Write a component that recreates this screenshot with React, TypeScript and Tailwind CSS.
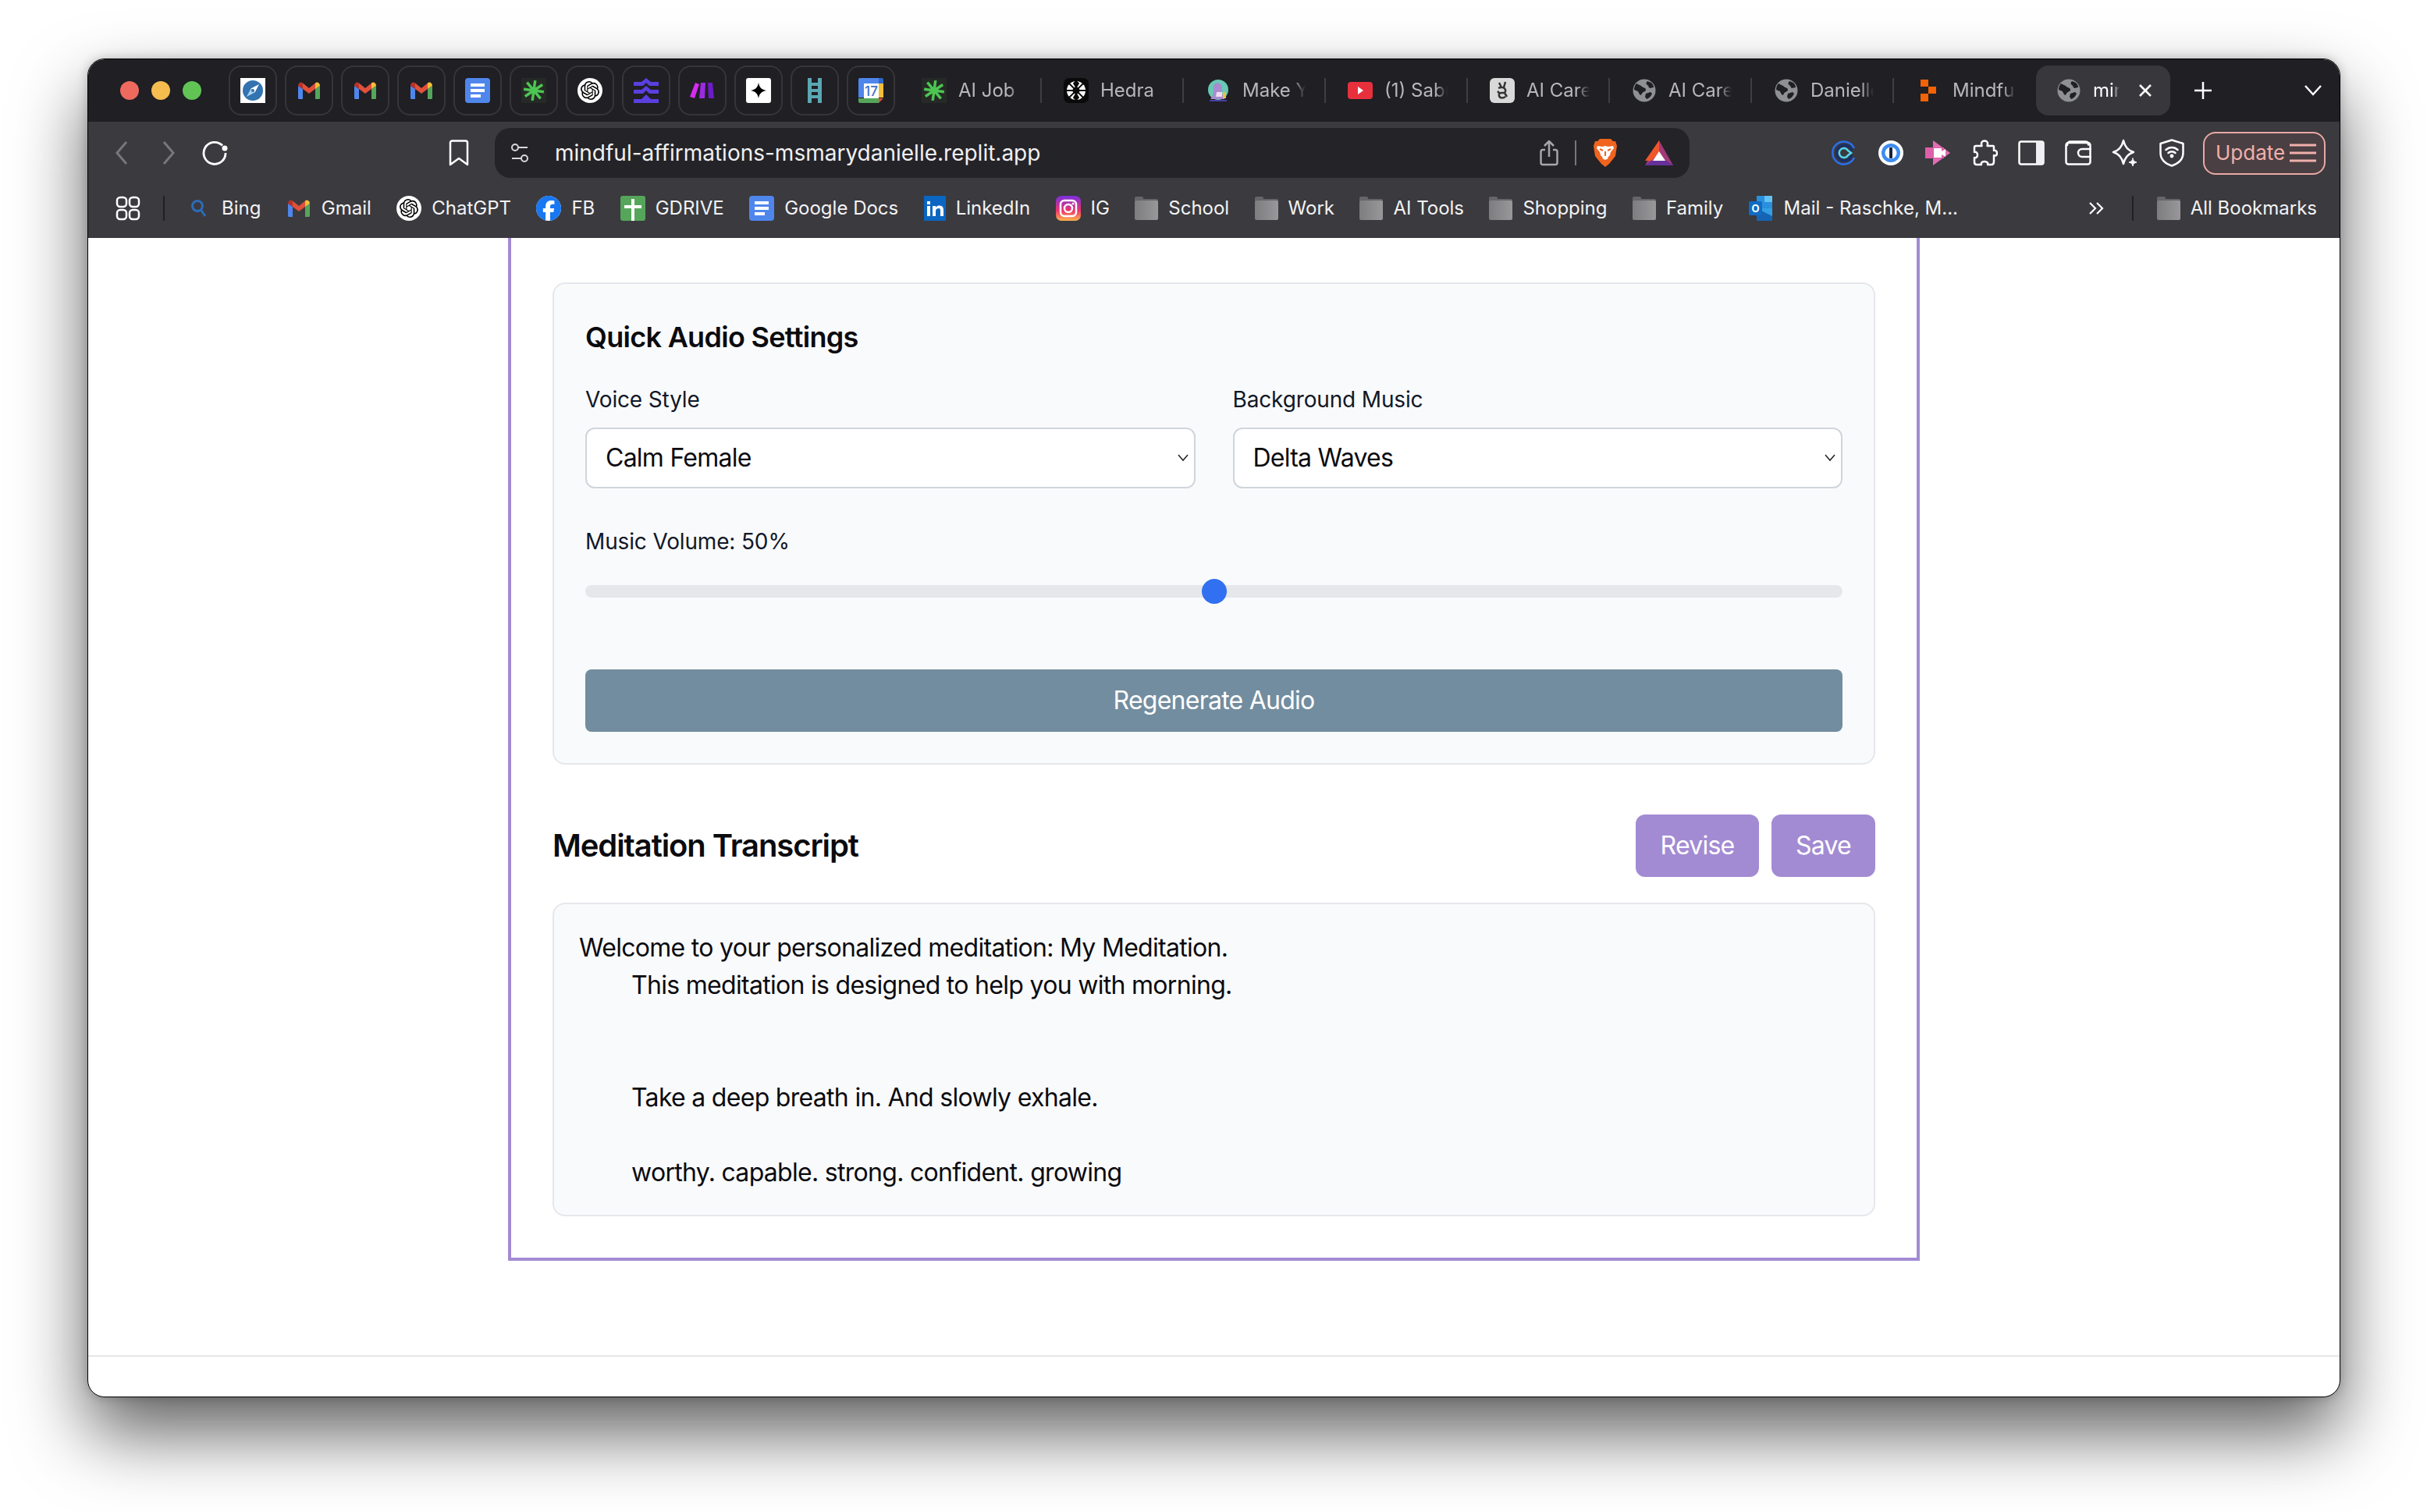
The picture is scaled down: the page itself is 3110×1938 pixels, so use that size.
import { SiOpenai, SiFacebook } from "react-icons/si";

const Gmail = () => (
	<svg width="32" height="32" viewBox="0 0 32 32">
		<path d="M2 10v15.500A1.500 1.500 0 0 0 3.500 27H8V14z" fill="#4f86ec" />
		<path d="M24 14v13h4.500a1.500 1.500 0 0 0 1.500-1.500V10z" fill="#55a65a" />
		<path d="M8 6.500 16 13l8-6.500V14l-8 6-8-6z" fill="#e0503a" />
		<path d="M2 10c0-4 4-5.500 6-3.500V14l-6-4z" fill="#b5342a" />
		<path d="M30 10c0-4-4-5.500-6-3.500V14l6-4z" fill="#f4be3a" />
	</svg>
);

const Compass = () => (
	<svg width="32" height="32" viewBox="0 0 32 32">
		<rect width="32" height="32" fill="#fff" />
		<circle cx="16" cy="16" r="13" fill="#3273b0" />
		<path d="M24 8 18.500 18.500 13.500 13.500z" fill="#fff" />
		<path d="M8 24 13.500 13.500 18.500 18.500z" fill="#a5d3f0" />
		<circle cx="16" cy="16" r="2" fill="#3273b0" />
	</svg>
);

const Docs = () => (
	<svg width="32" height="32" viewBox="0 0 32 32">
		<rect width="32" height="32" rx="4" fill="#4f86ec" />
		<path d="M7 7h18v4H7zM7 14h18v4H7zM7 21h13v4H7z" fill="#fff" />
	</svg>
);

const Spark = () => (
	<svg width="32" height="32" viewBox="0 0 32 32">
		<rect width="32" height="32" fill="#262a26" />
		<path d="M16 3v26M6 7l20 18M26 7 6 25M3 16h26" stroke="#4cc552" strokeWidth="3.500" transform="rotate(8 16 16)" />
	</svg>
);

const ChatGpt = () => (
	<span className="flex h-8 w-8 items-center justify-center rounded-full bg-white text-black">
		<SiOpenai size={24} />
	</span>
);

const Layers = () => (
	<svg width="32" height="32" viewBox="0 0 32 32" fill="#5b3fe0">
		<path d="M0 5h10l6-5 6 5h10v5H20l-4-4-4 4H0z" />
		<path d="M0 15h10l6-5 6 5h10v5H20l-4-4-4 4H0z" />
		<path d="M0 27h10l6-6 6 6h10v5H0z" />
	</svg>
);

const Make = () => (
	<svg width="32" height="32" viewBox="0 0 32 32">
		<path d="M7 6 12 8 6 26 0 24z" fill="#d52cf0" />
		<path d="M14 6h6l-1 20h-7z" fill="#9a2be0" />
		<path d="M23 6h6l2 20h-7z" fill="#6d1cc8" />
	</svg>
);

const GeminiStar = () => (
	<svg width="32" height="32" viewBox="0 0 32 32">
		<rect width="32" height="32" rx="3" fill="#fff" />
		<path d="M16 6c1 6 4 9 10 10-6 1-9 4-10 10-1-6-4-9-10-10 6-1 9-4 10-10z" fill="#000" />
	</svg>
);

const Ladder = () => (
	<svg width="32" height="32" viewBox="0 0 32 32" fill="#5ba7b3">
		<path d="M7 0h5v32H7zM20 0h5v32h-5zM12 6h8v4h-8zM12 14h8v4h-8zM12 22h8v4h-8z" />
	</svg>
);

const Calendar = () => (
	<svg width="32" height="32" viewBox="0 0 32 32">
		<path d="M0 2a2 2 0 0 1 2-2h24v7H7v18H0z" fill="#4f86ec" />
		<path d="M26 0h4a2 2 0 0 1 2 2v5h-6z" fill="#2f66c8" />
		<rect x="7" y="7" width="19" height="19" fill="#fff" />
		<path d="M26 7h6v18h-6z" fill="#f4be3a" />
		<path d="M0 26h26v6H2a2 2 0 0 1-2-2z" fill="#55a65a" />
		<path d="M26 26h6l-6 6z" fill="#e0503a" />
		<text x="16.500" y="23" textAnchor="middle" fontSize="17" fontFamily="Inter, sans-serif" fontWeight="500" fill="#3d70c9">17</text>
	</svg>
);

const Hedra = () => (
	<svg width="32" height="32" viewBox="0 0 32 32">
		<rect width="32" height="32" rx="7" fill="#0a0a0a" />
		<circle cx="16" cy="16" r="12" fill="#fff" />
		<path d="M16 4l-3 3 3 5 3-5zM16 28l-3-3 3-5 3 5zM4 16h4l4 0M28 16h-4l-4 0M7 7l7 7M25 25l-7-7M25 7l-7 7M7 25l7-7" stroke="#0a0a0a" strokeWidth="1.800" fill="#0a0a0a" />
		<circle cx="16" cy="16" r="4.500" fill="#0a0a0a" />
	</svg>
);

const Mascot = () => (
	<svg width="32" height="32" viewBox="0 0 32 32">
		<circle cx="16" cy="15" r="13" fill="#68c9b4" />
		<path d="M12 7c5-2 9 1 9 6v8h3v6H6c3-3 4-6 4-10 0-3 0-8 2-10z" fill="#a98bd0" />
		<path d="M14 18h7v6h-8z" fill="#f1dcef" />
		<rect x="22" y="18" width="4" height="8" fill="#e8c24a" />
		<path d="M5 28h22v2H5z" fill="#4a3fa8" />
	</svg>
);

const YouTube = () => (
	<svg width="32" height="32" viewBox="0 0 32 32">
		<rect y="5" width="32" height="22" rx="4" fill="#e8303d" />
		<path d="M13 11l7 5-7 5z" fill="#fff" />
	</svg>
);

const Hand = () => (
	<svg width="32" height="32" viewBox="0 0 32 32">
		<rect width="32" height="32" rx="6" fill="#d9d9d9" />
		<path d="M12 6l3 6M20 5l-2 7M11 13c4-2 8-1 9 2s-1 4-4 4 -5 1-4 4 5 3 8 1M10 17l3 3M19 19l3 5" stroke="#333" strokeWidth="2.500" fill="none" />
	</svg>
);

const Globe = () => (
	<svg width="32" height="32" viewBox="0 0 32 32">
		<circle cx="16" cy="16" r="14.500" fill="#8e9093" />
		<path d="M6 7c3 2 5 2 7 4s5 1 5 4-4 2-5 5-3 2-4-1-4-3-6-4c0-3 1-6 3-8zM20 4l5 2c2 2 3 4 3 6l-5 1c-2-1-1-3-3-4s-2-3 0-5zM18 20l6-2 2 2c-2 4-4 6-7 7l-2-3z" fill="#1f1f24" />
	</svg>
);

const Replit = () => (
	<svg width="32" height="32" viewBox="0 0 32 32" fill="#f26207">
		<path d="M6 2h10v9H6zM16 11h10v9H16zM6 20h10v10H6z" />
	</svg>
);

const Folder = () => (
	<svg width="30" height="32" viewBox="0 0 30 32">
		<defs>
			<linearGradient id="fold" x1="0" x2="1" y1="0" y2="0">
				<stop offset="0" stopColor="#7d7d80" />
				<stop offset="1" stopColor="#98989b" />
			</linearGradient>
		</defs>
		<path d="M0 3a2 2 0 0 1 2-2h7a2 2 0 0 1 2 2v1h17a2 2 0 0 1 2 2v2H0z" fill="#66666a" />
		<rect y="6" width="30" height="25" rx="2" fill="url(#fold)" />
	</svg>
);

const pinned = [Compass, Gmail, Gmail, Gmail, Docs, Spark, ChatGpt, Layers, Make, GeminiStar, Ladder, Calendar];

const tabs = [
	{ Icon: Spark, title: "AI Job Search", sep: true },
	{ Icon: Hedra, title: "Hedra", sep: true },
	{ Icon: Mascot, title: "Make Your Own", sep: true },
	{ Icon: YouTube, title: "(1) Sabrina", sep: true },
	{ Icon: Hand, title: "AI Career", sep: true },
	{ Icon: Globe, title: "AI Career", sep: true },
	{ Icon: Globe, title: "Danielle", sep: true },
	{ Icon: Replit, title: "Mindful", sep: false },
];

const BingIcon = () => (
	<svg width="32" height="32" viewBox="0 0 32 32" fill="none" stroke="#2b6cb8" strokeWidth="3">
		<circle cx="14" cy="13" r="6.500" />
		<path d="M18.500 18 24 26" />
	</svg>
);

const Drive = () => (
	<svg width="32" height="32" viewBox="0 0 32 32">
		<rect width="32" height="32" rx="3" fill="#55a65a" />
		<path d="M14 4h4v8h9v4h-9v16h-4V16H5v-4h9z" fill="#fff" />
	</svg>
);

const Fb = () => (
	<span className="flex h-8 w-8 items-center justify-center rounded-full bg-white text-[#1877f2]">
		<SiFacebook size={32} />
	</span>
);

const LinkedIn = () => (
	<svg width="28" height="32" viewBox="0 0 28 32">
		<rect width="28" height="32" fill="#0a66c2" />
		<path d="M4 13h4v13H4zM4 7h4v4H4zM11 13h4v2c1-2 3-2.500 5-2.500 4 0 5 3 5 6V26h-4v-7c0-2-.5-3-2-3s-4 1-4 3v7h-4z" fill="#fff" />
	</svg>
);

const Insta = () => (
	<svg width="32" height="32" viewBox="0 0 32 32">
		<defs>
			<linearGradient id="ig" x1="0" x2="0" y1="1" y2="0">
				<stop offset="0" stopColor="#fdb44b" />
				<stop offset="0.4" stopColor="#f0356b" />
				<stop offset="1" stopColor="#7a2fe0" />
			</linearGradient>
		</defs>
		<rect width="32" height="32" rx="7" fill="url(#ig)" />
		<rect x="6" y="6" width="20" height="20" rx="5" fill="none" stroke="#fff" strokeWidth="2.500" />
		<circle cx="16" cy="16" r="5" fill="none" stroke="#fff" strokeWidth="2.500" />
		<circle cx="22" cy="10" r="1.500" fill="#fff" />
	</svg>
);

const Outlook = () => (
	<svg width="32" height="32" viewBox="0 0 32 32">
		<path d="M10 0h20v16H10z" fill="#2a8fdc" />
		<path d="M20 0h10v8H20z" fill="#62c3f2" />
		<path d="M10 16h20v16H10z" fill="#1664b4" />
		<path d="M10 16l20 10V16z" fill="#33a0e6" />
		<rect y="7" width="17" height="18" rx="2" fill="#0f6cc4" />
		<text x="8.500" y="21" textAnchor="middle" fontSize="13" fontWeight="700" fontFamily="Inter, sans-serif" fill="#fff">O</text>
	</svg>
);

const bookmarks = [
	{ Icon: BingIcon, label: "Bing" },
	{ Icon: Gmail, label: "Gmail" },
	{ Icon: ChatGpt, label: "ChatGPT" },
	{ Icon: Fb, label: "FB" },
	{ Icon: Drive, label: "GDRIVE" },
	{ Icon: Docs, label: "Google Docs" },
	{ Icon: LinkedIn, label: "LinkedIn" },
	{ Icon: Insta, label: "IG" },
	{ Icon: Folder, label: "School" },
	{ Icon: Folder, label: "Work" },
	{ Icon: Folder, label: "AI Tools" },
	{ Icon: Folder, label: "Shopping" },
	{ Icon: Folder, label: "Family" },
	{ Icon: Outlook, label: "Mail - Raschke, M..." },
];

const stroke = { fill: "none", stroke: "#fff", strokeWidth: 2.500, strokeLinecap: "round", strokeLinejoin: "round" } as const;

const extensions = [
	<svg key="cal" width="32" height="32" viewBox="0 0 32 32" fill="none">
		<path d="M29 10A14.500 14.500 0 1 0 29 22" stroke="#2b6fe8" strokeWidth="2.500" />
		<path d="M26 13a10 10 0 1 0 0 6" stroke="#15306e" strokeWidth="3" />
		<path d="M21 13a6 6 0 1 0 0 6l4-3z" stroke="#54d8ee" strokeWidth="2.500" />
	</svg>,
	<svg key="one" width="32" height="32" viewBox="0 0 32 32">
		<circle cx="16" cy="16" r="16" fill="#fff" />
		<circle cx="16" cy="16" r="12" fill="#3d8cf0" />
		<circle cx="16" cy="16" r="7.500" fill="#fff" />
		<rect x="14" y="9" width="4" height="14" rx="1" fill="#16243e" />
	</svg>,
	<svg key="vid" width="32" height="32" viewBox="0 0 32 32">
		<path d="M10 0l22 16-22 16z" fill="#e36cb5" />
		<rect y="9" width="24" height="14" fill="#de5fa9" />
		<path d="M11 10h10v12H11zM21 14l5-3v10l-5-3z" fill="#fff" />
	</svg>,
	<svg key="puz" width="34" height="34" viewBox="0 0 34 34" {...stroke}>
		<path d="M13 5c0-2 2-3.500 4-3.500S21 3 21 5c0 1 0 2-.5 3H28c1 0 1 .5 1 1.500V14c2-1 4 1 4 3.500S31 21 29 20v8c0 3-1 4-3 4h-5c1-2-1-4-4-4s-5 2-4 4H7c-2 0-3-1-3-3v-6c2 1 4-1 4-3.500S6 15 4 16V10c0-1.500 1-2 2-2h7.500C13 7 13 6 13 5z" />
	</svg>,
	<svg key="side" width="34" height="32" viewBox="0 0 34 32">
		<rect x="1.500" y="1.500" width="31" height="29" rx="2.500" fill="none" stroke="#fff" strokeWidth="2.500" />
		<path d="M23 1.500h7a2.500 2.500 0 0 1 2.500 2.500v24a2.500 2.500 0 0 1-2.500 2.500h-7z" fill="#f0f0f3" />
	</svg>,
	<svg key="wal" width="34" height="32" viewBox="0 0 34 32" {...stroke}>
		<rect x="1.500" y="3" width="31" height="27.500" rx="3" />
		<path d="M3 6c0-3 2-4.500 4-4.500h19c3 0 4 2 4 4M32.500 11H22a5 5 0 0 0 0 10h10.500" />
	</svg>,
	<svg key="spa" width="34" height="36" viewBox="0 0 34 36" {...stroke}>
		<path d="M15 2c2 9 6 13 13 15-7 2-11 6-13 15-2-9-6-13-13-15 7-2 11-6 13-15z" />
		<path d="M27 25c.5 3 1.500 4 5 5-3.500 1-4.500 2-5 5-.5-3-1.500-4-5-5 3.500-1 4.500-2 5-5z" fill="#fff" strokeWidth="1" />
	</svg>,
	<svg key="shi" width="32" height="36" viewBox="0 0 32 36" {...stroke}>
		<path d="M16 1.500 30.500 6v12c0 9-7 14-14.500 16.500C8.500 32 1.500 27 1.500 18V6z" />
		<path d="M8.500 14c4-4 11-4 15 0M11.500 18c2.500-2.500 6.500-2.500 9 0" />
		<circle cx="16" cy="22" r="1.200" fill="#fff" />
	</svg>,
];

function Browser() {
	return (
		<div className="h-[229px] shrink-0">
			{/* tab strip */}
			<div className="flex h-20 items-center bg-[#1f1f24]">
				<div className="ml-[41px] flex gap-4">
					<span className="h-6 w-6 rounded-full bg-[#ee6a5f]" />
					<span className="h-6 w-6 rounded-full bg-[#f5bd4f]" />
					<span className="h-6 w-6 rounded-full bg-[#61c454]" />
				</div>
				<div className="ml-[35px] flex gap-[10px]">
					{pinned.map((Icon, i) => (
						<div key={i} className="flex h-16 w-[62px] items-center justify-center rounded-2xl border-2 border-[#36353a]">
							<Icon />
						</div>
					))}
				</div>
				<div className="ml-[6px] flex">
					{tabs.map((t, i) => (
						<div key={i} className="flex h-16 w-[182px] items-center pl-[28px]">
							<t.Icon />
							<span className="ml-[15px] w-[81px] overflow-hidden whitespace-nowrap text-2xl text-[#b8b8ba] [mask-image:linear-gradient(to_right,black_80%,transparent)]">
								{t.title}
							</span>
							{t.sep && <span className="ml-auto h-8 w-[2px] bg-[#3f3e43]" />}
						</div>
					))}
				</div>
				<div className="flex h-16 w-[172px] items-center rounded-2xl bg-[#38373c] pl-[26px]">
					<Globe />
					<span className="ml-[15px] w-[34px] overflow-hidden whitespace-nowrap text-2xl text-white [mask-image:linear-gradient(to_right,black_70%,transparent)]">mindful</span>
					<svg className="ml-[23px]" width="20" height="20" viewBox="0 0 20 20" stroke="#fff" strokeWidth="2.500">
						<path d="M3 3l14 14M17 3 3 17" />
					</svg>
				</div>
				<svg className="ml-[30px]" width="24" height="24" viewBox="0 0 24 24" stroke="#fff" strokeWidth="2.500">
					<path d="M12 1v22M1 12h22" />
				</svg>
				<svg className="ml-[118px]" width="22" height="14" viewBox="0 0 22 14" fill="none" stroke="#fff" strokeWidth="2.500">
					<path d="M1 1l10 11L21 1" />
				</svg>
			</div>

			{/* toolbar */}
			<div className="flex h-20 items-center bg-[#3b3a3f]">
				<div className="ml-[13px] flex w-[60px] justify-center">
					<svg width="18" height="32" viewBox="0 0 18 32" fill="none" stroke="#77777b" strokeWidth="3"><path d="M15 2 3 16l12 14" /></svg>
				</div>
				<div className="flex w-[60px] justify-center">
					<svg width="18" height="32" viewBox="0 0 18 32" fill="none" stroke="#77777b" strokeWidth="3"><path d="M3 2l12 14L3 30" /></svg>
				</div>
				<div className="flex w-[60px] justify-center">
					<svg width="36" height="32" viewBox="0 0 36 32" fill="none" stroke="#fff" strokeWidth="2.800">
						<path d="M27 6.500A14 14 0 1 0 31 16" />
						<circle cx="30" cy="10" r="3.500" fill="#fff" stroke="none" />
					</svg>
				</div>
				<div className="ml-[252px] flex w-[60px] justify-center">
					<svg width="26" height="34" viewBox="0 0 26 34" fill="none" stroke="#fff" strokeWidth="2.500" strokeLinejoin="round">
						<path d="M2 4a2.500 2.500 0 0 1 2.500-2.500h17A2.500 2.500 0 0 1 24 4v28l-11-8-11 8z" />
					</svg>
				</div>
				<div className="ml-4 flex h-16 w-[1531px] items-center rounded-[20px] bg-[#242328] pl-5 pr-[21px]">
					<svg width="24" height="26" viewBox="0 0 24 26" fill="none" stroke="#d8d8da" strokeWidth="2">
						<circle cx="6" cy="6" r="4" />
						<path d="M10 6h12M2 20h12" />
						<circle cx="18" cy="20" r="4" />
					</svg>
					<span className="ml-[33px] text-[28px] text-[#f0f0f1]">mindful-affirmations-msmarydanielle.replit.app</span>
					<svg className="ml-auto" width="24" height="34" viewBox="0 0 24 34" fill="none" stroke="#a6a6a9" strokeWidth="2.500" strokeLinejoin="round">
						<path d="M7 13H4a2.500 2.500 0 0 0-2.500 2.500v14A2.500 2.500 0 0 0 4 32h16a2.500 2.500 0 0 0 2.500-2.500v-14A2.500 2.500 0 0 0 20 13h-3M12 22V2M6 8l6-6 6 6" />
					</svg>
					<span className="ml-[21px] h-8 w-[2px] bg-[#77777b]" />
					<svg className="ml-[22px]" width="30" height="36" viewBox="0 0 30 36">
						<path d="M8 0h14l3 3h3l2 6-2 13-8 10-5 4-5-4-8-10L0 9l2-6h3z" fill="#f0641e" />
						<path d="M5 9l6 1 4-1 4 1 6-1 1 3-4 5-1 4-3 3 1 1-4 2-4-2 1-1-3-3-1-4-4-5z" fill="#fff" />
						<path d="M8 13l4 2M22 13l-4 2M15 16v6" stroke="#f0641e" strokeWidth="2" />
					</svg>
					<svg className="ml-9" width="36" height="32" viewBox="0 0 36 32">
						<path d="M18 0 36 32H0z" fill="#a13a78" />
						<path d="M18 0v16L8 26H0z" fill="#f0562b" />
						<path d="M0 32l8-6h20l8 6z" fill="#66309a" />
						<path d="M18 14l8 12H10z" fill="#fff" />
					</svg>
				</div>
				<div className="ml-[168px] flex">
					{extensions.map((e, i) => (
						<div key={i} className="flex w-[60px] items-center justify-center">{e}</div>
					))}
				</div>
				<div className="ml-[10px] flex h-[55px] w-[157px] items-center gap-[6px] rounded-2xl border-2 border-[#e8a9a5] bg-[#4a3f42] pl-[14px]">
					<span className="text-[26px] leading-none text-[#f0b0ab]">Update</span>
					<svg width="34" height="26" viewBox="0 0 34 26" stroke="#f0b0ab" strokeWidth="3">
						<path d="M0 3h34M0 13h34M0 23h34" />
					</svg>
				</div>
			</div>

			{/* bookmarks */}
			<div className="flex h-[69px] items-center bg-[#3b3a3f] pb-2 pl-[35px] pr-[29px]">
				<svg width="32" height="32" viewBox="0 0 32 32" fill="none" stroke="#fff" strokeWidth="2.500">
					<rect x="2" y="2" width="12" height="12" rx="4" />
					<rect x="18" y="2" width="12" height="12" rx="4" />
					<rect x="2" y="18" width="12" height="12" rx="4" />
					<rect x="18" y="18" width="12" height="12" rx="4" />
				</svg>
				<span className="ml-[29px] mr-[28px] h-8 w-[2px] bg-[#1f1f24]" />
				<div className="flex items-center gap-[32.4px]">
					{bookmarks.map((b) => (
						<div key={b.label} className="flex items-center gap-[13px]">
							<b.Icon />
							<span className="whitespace-nowrap text-2xl text-[#f2f2f3]">{b.label}</span>
						</div>
					))}
				</div>
				<svg className="ml-auto" width="20" height="18" viewBox="0 0 20 18" fill="none" stroke="#fff" strokeWidth="2.200">
					<path d="M2 2l7 7-7 7M11 2l7 7-7 7" />
				</svg>
				<span className="ml-9 mr-[30px] h-8 w-[2px] bg-[#1f1f24]" />
				<div className="flex items-center gap-[13px]">
					<Folder />
					<span className="whitespace-nowrap text-2xl text-[#f2f2f3]">All Bookmarks</span>
				</div>
			</div>
		</div>
	);
}

function SelectBox({ label, value }: { label: string; value: string }) {
	return (
		<div>
			<div className="mb-4 text-[28px] leading-10 tracking-[-0.15px] text-[#111827]">{label}</div>
			<div className="flex h-[78px] items-center justify-between rounded-xl border-2 border-[#d1d5db] bg-white pl-6 pr-[7px] text-[32px] tracking-[-0.75px] text-[#0b0b0f]">
				{value}
				<svg width="14" height="10" viewBox="0 0 14 10" fill="none" stroke="#222" strokeWidth="1.500">
					<path d="M1 1l6 7 6-7" />
				</svg>
			</div>
		</div>
	);
}

export default function App() {
	return (
		<div className="h-[1938px] w-[3110px] overflow-hidden bg-white pl-[112px] pt-[75px] [font-family:Inter,sans-serif]">
			<div className="flex h-[1716px] w-[2887px] flex-col overflow-hidden rounded-[22px] border border-black bg-white shadow-[0_46px_92px_rgba(0,0,0,0.62),0_0_14px_rgba(0,0,0,0.22)]">
				<Browser />

				<main className="flex min-h-0 flex-1 flex-col items-center overflow-hidden">
					<div className="h-[1311px] w-[1809px] shrink-0 border-x-4 border-b-4 border-[#a38bd3] px-[53px] pt-[57px]">
						<section className="rounded-2xl border-2 border-[#e5e7eb] bg-[#f9fafb] p-10">
							<h3 className="mb-8 text-4xl leading-14 font-semibold tracking-[-0.7px] text-[#0b0b0f]">Quick Audio Settings</h3>
							<div className="grid grid-cols-2 gap-12">
								<SelectBox label="Voice Style" value="Calm Female" />
								<SelectBox label="Background Music" value="Delta Waves" />
							</div>
							<div className="mt-12 text-[28px] leading-10 tracking-[-0.15px] text-[#111827]">Music Volume: 50%</div>
							<div className="relative mt-9 h-4 rounded-full bg-[#e5e7eb]">
								<span className="absolute left-1/2 top-1/2 h-8 w-8 -translate-x-1/2 -translate-y-1/2 rounded-full bg-[#3170f0]" />
							</div>
							<button className="mt-[92px] h-20 w-full rounded-lg bg-[#728d9f] text-[32px] tracking-[-0.75px] text-white">Regenerate Audio</button>
						</section>

						<div className="mt-16 flex items-center justify-between">
							<h3 className="text-[40px] font-semibold tracking-[-1.1px] text-[#0b0b0f]">Meditation Transcript</h3>
							<div className="flex gap-4">
								<button className="h-20 w-[158px] rounded-xl bg-[#a38bd3] text-[32px] tracking-[-0.75px] text-white">Revise</button>
								<button className="h-20 w-[133px] rounded-xl bg-[#a38bd3] text-[32px] tracking-[-0.75px] text-white">Save</button>
							</div>
						</div>

						<section className="mt-[33px] rounded-2xl border-2 border-[#e5e7eb] bg-[#f9fafb] px-8 pb-[30px] pt-8 text-[32px] leading-12 tracking-[-0.7px] text-[#0b0b0f]">
							<p>Welcome to your personalized meditation: My Meditation.</p>
							<p className="pl-[67px]">This meditation is designed to help you with morning.</p>
							<p className="mt-24 pl-[67px]">Take a deep breath in. And slowly exhale.</p>
							<p className="mt-12 pl-[67px]">worthy. capable. strong. confident. growing</p>
						</section>
					</div>
				</main>

				<div className="h-[53px] shrink-0 border-t-2 border-[#e5e5e5]" />
			</div>
		</div>
	);
}
